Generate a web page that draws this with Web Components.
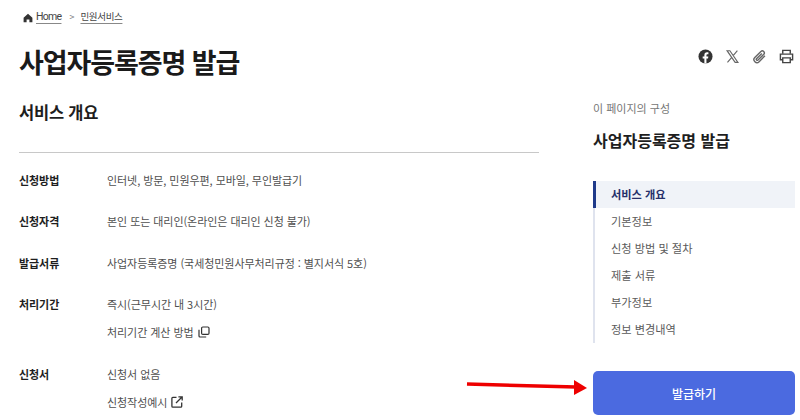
<!DOCTYPE html>
<html lang="ko">
<head>
<meta charset="utf-8">
<title>사업자등록증명 발급</title>
<style>
html, body { margin: 0; padding: 0; background: #fff; }
body { width: 800px; height: 420px; overflow: hidden; font-family: "Noto Sans CJK KR", "Noto Sans", sans-serif; color: #1e1e1e; }
</style>
</head>
<body>
<svc-page>
  <svc-crumbs slot="crumbs"></svc-crumbs>
  <svc-share slot="share"></svc-share>
  <svc-overview slot="main">
    <svc-row label="신청방법"><div>인터넷, 방문, 민원우편, 모바일, 무인발급기</div></svc-row>
    <svc-row label="신청자격"><div>본인 또는 대리인(온라인은 대리인 신청 불가)</div></svc-row>
    <svc-row label="발급서류"><div>사업자등록증명 (국세청민원사무처리규정 : 별지서식 5호)</div></svc-row>
    <svc-row label="처리기간">
      <div>즉시(근무시간 내 3시간)</div>
      <div>처리기간 계산 방법 <svg width="12" height="12" viewBox="0 0 12 12" fill="none" stroke="#333" stroke-width="1.2"><rect x="3.600" y="1" width="7.400" height="7.400" rx="1.200"/><path d="M1 3.800v6.200a1 1 0 0 0 1 1h6.200"/></svg></div>
    </svc-row>
    <svc-row label="신청서">
      <div>신청서 없음</div>
      <div>신청작성예시 <svg width="12" height="12" viewBox="0 0 12 12" fill="none" stroke="#333" stroke-width="1.300"><path d="M5.500 1.300H1.800a.9.9 0 0 0-.9.9v8a.9.9 0 0 0 .9.9h8a.9.9 0 0 0 .9-.9V6.500"/><path d="M5 7 11 1M7.400.8h3.800v3.800"/></svg></div>
    </svc-row>
  </svc-overview>
  <svc-aside slot="aside" title-text="사업자등록증명 발급">
    <svc-nav-item active>서비스 개요</svc-nav-item>
    <svc-nav-item>기본정보</svc-nav-item>
    <svc-nav-item>신청 방법 및 절차</svc-nav-item>
    <svc-nav-item>제출 서류</svc-nav-item>
    <svc-nav-item>부가정보</svc-nav-item>
    <svc-nav-item>정보 변경내역</svc-nav-item>
  </svc-aside>
</svc-page>

<script>
class SvcElement extends HTMLElement {
    constructor() {
        super();
        this.attachShadow({ mode: 'open' });
        this.shadowRoot.innerHTML = this.markup();
    }
    markup() { return ''; }
}

class SvcPage extends SvcElement {
    markup() {
        return `
        <style>
        :host { display: block; position: relative; width: 800px; height: 420px; overflow: hidden; }
        #top { padding: 9px 0 0 36px; height: 21px; }
        #head { display: flex; align-items: center; justify-content: space-between; padding: 0 6px 0 19px; height: 46px; margin-top: 9px; }
        h1 { margin: 0; font-size: 27px; font-weight: 700; line-height: 46px; letter-spacing: -1.100px; color: #1a1a1a; }
        #cols { display: flex; padding-left: 19px; margin-top: 15px; }
        #main { width: 520px; flex: none; }
        #aside { width: 202px; flex: none; margin-left: 54px; }
        #arrow { position: absolute; left: 466px; top: 377px; }
        </style>
        <div id="top"><slot name="crumbs"></slot></div>
        <div id="head"><h1>사업자등록증명 발급</h1><slot name="share"></slot></div>
        <div id="cols">
          <div id="main"><slot name="main"></slot></div>
          <div id="aside"><slot name="aside"></slot></div>
        </div>
        <svg id="arrow" width="124" height="20" viewBox="0 0 124 20"><path d="M1 7 110 10" stroke="#ee0000" stroke-width="3.500" fill="none"/><path d="M108 3 121 11 108 18z" fill="#ee0000"/></svg>
        `;
    }
}

class SvcCrumbs extends SvcElement {
    markup() {
        return `
        <style>
        :host { display: flex; align-items: center; font-size: 9.500px; color: #444; line-height: 15px; }
        a { color: inherit; text-decoration: underline; text-underline-offset: 3px; text-decoration-color: #888; letter-spacing: -.35px; }
        a.en { font-family: Roboto, sans-serif; font-size: 10.500px; letter-spacing: -.7px; }
        svg { position: absolute; left: 23px; top: 13px; }
        span { margin: 0 6px 0 8px; color: #777; font-size: 9px; }
        </style>
        <svg width="10" height="10" viewBox="0 0 10 10"><path d="M5 .8.6 4.800v4.400h3V6.400h2.800v2.800h3V4.800z" fill="#333"/></svg>
        <a class="en">Home</a><span>&gt;</span><a>민원서비스</a>
        `;
    }
}

class SvcShare extends SvcElement {
    markup() {
        return `
        <style>
        :host { display: flex; align-items: center; gap: 12px; margin-top: -11px; }
        svg { display: block; width: 15px; height: 15px; }
        </style>
        <svg viewBox="0 0 16 16"><circle cx="8" cy="8" r="7.500" fill="#333"/><path d="M6.800 15.500V10.200H5V8h1.800V6.400C6.800 4.500 7.900 3.500 9.600 3.500c.8 0 1.500.1 1.500.1v1.900h-.9c-.9 0-1.200.6-1.200 1.200V8h2l-.3 2.200H9v5.300z" fill="#fff"/></svg>
        <svg viewBox="0 0 16 16"><path d="M2.200 1.800h3l8.600 12.400h-3zM13.200 1.800 8.700 7M7 9.200l-4.400 5" fill="none" stroke="#666" stroke-width="1.200"/></svg>
        <svg viewBox="0 0 16 16"><path d="M13.800 7.300 7.600 13.500a3.200 3.200 0 0 1-4.600-4.500L9.500 2.600a2.200 2.200 0 0 1 3.100 3.100L6.400 11.800a1.100 1.100 0 0 1-1.600-1.500L10.500 4.700" fill="none" stroke="#666" stroke-width="1.500"/></svg>
        <svg viewBox="0 0 16 16" fill="none" stroke="#444" stroke-width="1.500"><path d="M4 5V1.500h8V5"/><path d="M4 11.500H1.500V5.500h13v6H12"/><path d="M4 9.500h8v5H4z"/></svg>
        `;
    }
}

class SvcOverview extends SvcElement {
    markup() {
        return `
        <style>
        :host { display: block; }
        h2 { margin: 0; font-size: 16.500px; font-weight: 700; line-height: 24px; letter-spacing: -.2px; color: #1e1e1e; }
        #rows { margin-top: 28px; border-top: 1px solid #c8c8c8; padding-top: 17.500px; display: flex; flex-direction: column; gap: 23.500px; }
        </style>
        <h2>서비스 개요</h2>
        <div id="rows"><slot></slot></div>
        `;
    }
}

class SvcRow extends SvcElement {
    markup() {
        return `
        <style>
        :host { display: flex; font-size: 11px; line-height: 18px; letter-spacing: -.06px; }
        #label { width: 88px; flex: none; font-weight: 700; color: #1e1e1e; }
        #value { display: flex; flex-direction: column; gap: 10px; color: #4f4f4f; }
        ::slotted(div) { display: flex; align-items: center; gap: 4px; height: 18px; }
        </style>
        <div id="label">${this.getAttribute('label')}</div>
        <div id="value"><slot></slot></div>
        `;
    }
}

class SvcAside extends SvcElement {
    markup() {
        return `
        <style>
        :host { display: block; }
        #cap { font-size: 11px; line-height: 16px; color: #767676; }
        #name { font-size: 16px; font-weight: 700; line-height: 24px; margin-top: 12px; color: #1e1e1e; }
        nav { margin-top: 29px; border-left: 2px solid #dfe3ee; }
        #issue { margin-top: 28px; height: 44px; border-radius: 5px; background: #4b6ae0; color: #fff; font-size: 12px; font-weight: 500; display: flex; align-items: center; justify-content: center; }
        </style>
        <div id="cap">이 페이지의 구성</div>
        <div id="name">${this.getAttribute('title-text')}</div>
        <nav><slot></slot></nav>
        <div id="issue">발급하기</div>
        `;
    }
}

class SvcNavItem extends SvcElement {
    markup() {
        return `
        <style>
        :host { display: block; height: 27px; line-height: 27px; padding-left: 16px; margin-left: -2px; border-left: 2px solid transparent; font-size: 11.200px; color: #5a5a5a; }
        :host([active]) { border-left: 3px solid #1f3a8a; padding-left: 15px; background: #f0f3f8; color: #26306a; font-weight: 700; line-height: 26px; }
        </style>
        <slot></slot>
        `;
    }
}

customElements.define('svc-page', SvcPage);
customElements.define('svc-crumbs', SvcCrumbs);
customElements.define('svc-share', SvcShare);
customElements.define('svc-overview', SvcOverview);
customElements.define('svc-row', SvcRow);
customElements.define('svc-aside', SvcAside);
customElements.define('svc-nav-item', SvcNavItem);
</script>
</body>
</html>
